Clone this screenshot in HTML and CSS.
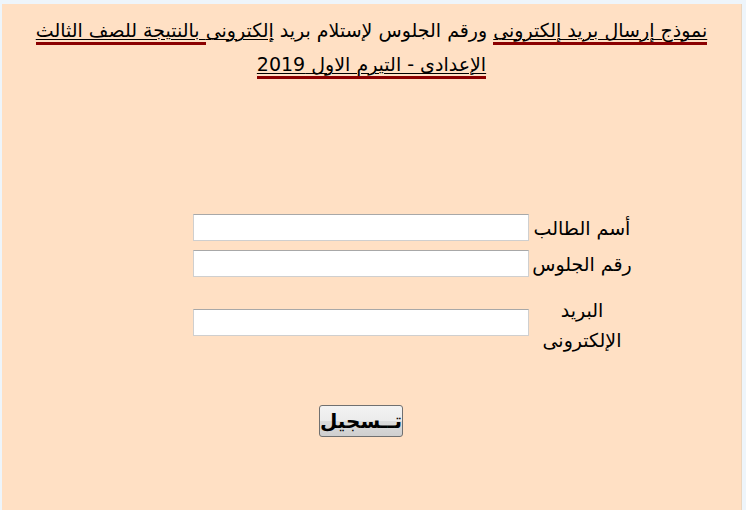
FILE: index.html
```html
<!DOCTYPE html>
<html lang="ar">
<head>
<meta charset="utf-8">
<title>نموذج إرسال بريد إلكترونى</title>
<link rel="stylesheet" href="styles.css">
</head>
<body>
<div class="page">
  <div class="title">
    <span class="ul red">نموذج إرسال بريد إلكترونى</span> ورقم الجلوس لإستلام بريد <span class="ul">إلكترونى</span><span class="ul red"> بالنتيجة للصف الثالث</span><br>
    <span class="ul red">الإعدادى - التيرم الاول 2019</span>
  </div>
  <form class="form">
    <div class="row">
      <label class="lbl">أسم الطالب</label>
      <input class="field" type="text">
    </div>
    <div class="row row2">
      <label class="lbl">رقم الجلوس</label>
      <input class="field" type="text">
    </div>
    <div class="row row3">
      <label class="lbl lbl2">البريد<br>الإلكترونى</label>
      <input class="field" type="text">
    </div>
    <div class="actions">
      <button class="btn" type="button">تــسجيل</button>
    </div>
  </form>
</div>
</body>
</html>
```
FILE: styles.css
```css
html, body {
  margin: 0;
  padding: 0;
}
body {
  background: #eef5fb;
  font-family: "DejaVu Sans", sans-serif;
}
.page {
  margin: 4px 4px 0 2px;
  height: 506px;
  background: #ffe0c4;
  border-right: 1px solid #ead6c0;
  padding-top: 9px;
  box-sizing: border-box;
}
.title {
  direction: rtl;
  text-align: center;
  font-size: 19px;
  line-height: 34px;
  color: #000;
}
.ul {
  text-decoration: underline;
  text-decoration-thickness: 1px;
  text-underline-offset: 2px;
}
.red {
  border-bottom: 3px solid #8b0000;
  padding-bottom: 1px;
}
.form {
  margin: 130px 0 0 191px;
  width: 438px;
}
.row {
  direction: rtl;
  display: flex;
  align-items: center;
  gap: 4px;
}
.row2 {
  margin-top: 4px;
}
.row3 {
  margin-top: 10px;
}
.lbl {
  flex: 0 0 98px;
  width: 98px;
  min-width: 0;
  display: flex;
  justify-content: center;
  white-space: nowrap;
  font-size: 19px;
  line-height: 30px;
  color: #000;
  padding-top: 2px;
}
.lbl2 {
  display: block;
  text-align: center;
  padding-top: 6px;
}
.field {
  flex: 0 0 336px;
  width: 336px;
  height: 27px;
  box-sizing: border-box;
  margin: 0;
  border: 1px solid #cfcfcf;
  border-top-color: #a8a8a8;
  background: #fff;
}
.actions {
  margin: 50px 0 0 126px;
  display: flex;
}
.btn {
  width: 84px;
  height: 32px;
  padding: 0;
  border: 1px solid #707070;
  border-radius: 3px;
  background: linear-gradient(#f3f3f3 0%, #ebebeb 50%, #dcdcdc 51%, #cfcfcf 100%);
  font-family: "DejaVu Sans", sans-serif;
  font-size: 20px;
  font-weight: bold;
  color: #000;
  direction: rtl;
}
```
